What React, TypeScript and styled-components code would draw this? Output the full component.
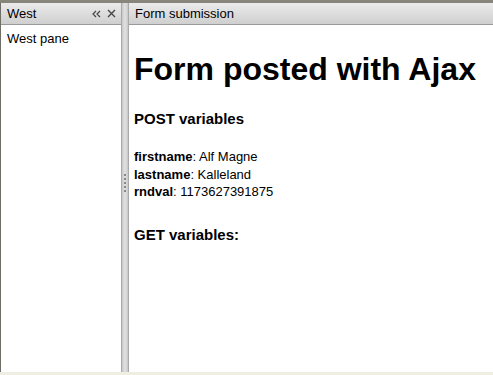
import React from "react";
import styled, { createGlobalStyle } from "styled-components";

const Global = createGlobalStyle`
  html, body { margin: 0; padding: 0; }
  body {
    background: #efeee2;
    font-family: "Liberation Sans", Arial, sans-serif;
    width: 493px;
    height: 375px;
    overflow: hidden;
  }
`;

const Frame = styled.div`
  display: flex;
  height: 369px;
  border-top: 3px solid #87867c;
  background: #fff;
`;

const Pane = styled.div<{ $width?: number }>`
  display: flex;
  flex-direction: column;
  ${(p) => (p.$width ? `width: ${p.$width}px; flex: none;` : "flex: 1; min-width: 0;")}
  background: #fff;
`;

const WestPane = styled(Pane)`
  border-left: 1px solid #6e6d66;
  border-right: 1px solid #a9a9a9;
`;

const Header = styled.div`
  display: flex;
  align-items: center;
  height: 21px;
  flex: none;
  padding: 0 5px 0 6px;
  background: linear-gradient(#ebebeb, #cfcfcf);
  border-bottom: 1px solid #999;
  font-size: 13px;
  color: #000;
  white-space: nowrap;
`;

const Title = styled.span`
  flex: 1;
`;

const Tools = styled.div`
  display: flex;
  align-items: center;
  gap: 6px;
  color: #333;
`;

const Content = styled.div`
  flex: 1;
  padding: 6px 6px;
  font-size: 13px;
  color: #000;
`;

const Splitter = styled.div`
  flex: none;
  width: 6px;
  background: linear-gradient(90deg, #c8c8c8, #e2e2e2 50%, #c8c8c8);
  border-right: 1px solid #a9a9a9;
  display: flex;
  align-items: center;
  justify-content: center;
`;

const Grip = styled.div`
  display: flex;
  flex-direction: column;
  gap: 2px;
  margin-top: -10px;
  span {
    width: 2px;
    height: 2px;
    background: #888;
  }
`;

const CenterContent = styled.div`
  flex: 1;
  padding: 0 4px 0 5px;
  color: #000;
  font-size: 13px;
`;

const H1 = styled.h1`
  font-size: 32px;
  font-weight: bold;
  margin: 26px 0 0;
  line-height: 37px;
`;

const H3 = styled.h3`
  font-size: 15px;
  font-weight: bold;
  margin: 22px 0 0;
  line-height: 18px;
`;

const Vars = styled.div`
  margin-top: 20px;
  line-height: 17.5px;
  b { font-weight: bold; }
`;

const GetTitle = styled(H3)`
  margin-top: 25px;
`;

const ChevronIcon = () => (
  <svg width="9" height="8" viewBox="0 0 9 8">
    <path d="M4 1 L1 4 L4 7 M8 1 L5 4 L8 7" stroke="#444" strokeWidth="1.2" fill="none" />
  </svg>
);

const CloseIcon = () => (
  <svg width="9" height="9" viewBox="0 0 9 9">
    <path d="M1 1 L8 8 M8 1 L1 8" stroke="#444" strokeWidth="1.3" fill="none" />
  </svg>
);

export default function App() {
  return (
    <>
      <Global />
      <Frame>
        <WestPane $width={120}>
          <Header>
            <Title>West</Title>
            <Tools>
              <ChevronIcon />
              <CloseIcon />
            </Tools>
          </Header>
          <Content>West pane</Content>
        </WestPane>
        <Splitter>
          <Grip>
            <span />
            <span />
            <span />
            <span />
            <span />
          </Grip>
        </Splitter>
        <Pane>
          <Header>
            <Title>Form submission</Title>
          </Header>
          <CenterContent>
            <H1>Form posted with Ajax</H1>
            <H3>POST variables</H3>
            <Vars>
              <b>firstname</b>: Alf Magne
              <br />
              <b>lastname</b>: Kalleland
              <br />
              <b>rndval</b>: 1173627391875
            </Vars>
            <GetTitle>GET variables:</GetTitle>
          </CenterContent>
        </Pane>
      </Frame>
    </>
  );
}
